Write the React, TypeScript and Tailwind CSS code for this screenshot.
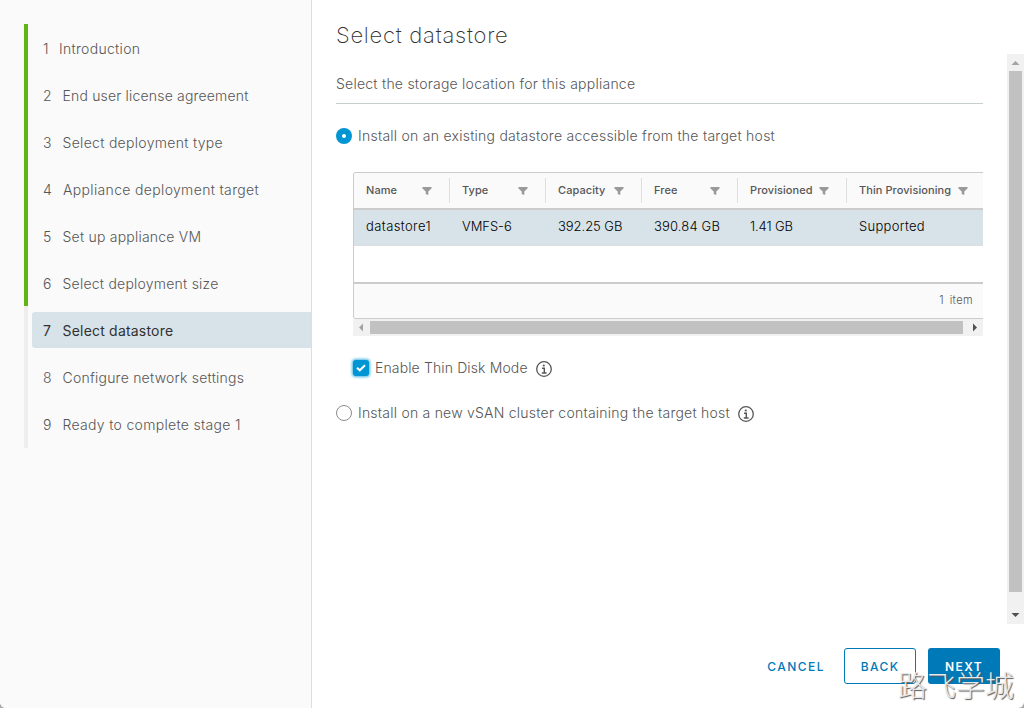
import { clsx } from "clsx";

const steps = [
  { label: "Introduction", text: "ml-[10px] tracking-[0.3px]" },
  { label: "End user license agreement", text: "ml-[11.5px] tracking-[0.18px]" },
  { label: "Select deployment type", text: "ml-[11.5px] tracking-[0.3px]" },
  { label: "Appliance deployment target", text: "ml-[12px] tracking-[0.34px]" },
  { label: "Set up appliance VM", text: "ml-[11.5px] tracking-[0.22px]" },
  { label: "Select deployment size", text: "ml-[11.5px] tracking-[0.23px]" },
  { label: "Select datastore", text: "ml-[11.5px] tracking-[0.2px]" },
  { label: "Configure network settings", text: "ml-[11.5px] tracking-[0.23px]" },
  { label: "Ready to complete stage 1", text: "ml-[11.5px] tracking-[0.31px]" },
];
const current = 6;

const columns = [
  { name: "Name", value: "datastore1", width: "w-24", icon: "mr-[17px]", text: "tracking-[0.4px]" },
  { name: "Type", value: "VMFS-6", width: "w-24", icon: "mr-[17px]", text: "tracking-[-0.05px]" },
  { name: "Capacity", value: "392.25 GB", width: "w-24", icon: "mr-[17px]", text: "tracking-[-0.05px]" },
  { name: "Free", value: "390.84 GB", width: "w-24", icon: "mr-[17px]", text: "tracking-[0.15px]" },
  { name: "Provisioned", value: "1.41 GB", width: "w-[109px]", icon: "mr-[17px]", text: "tracking-[-0.1px]" },
  { name: "Thin Provisioning", value: "Supported", width: "w-[136px]", icon: "mr-[15px]", text: "tracking-[0.3px]" },
];

function FilterIcon() {
  return (
    <svg width="10" height="8" viewBox="0 0 10 8" className="shrink-0 text-[#9a9a9a]">
      <path d="M0.5 0h9v1.6L6.3 4.6V8L3.7 6.9V4.6L0.5 1.6z" fill="currentColor" />
    </svg>
  );
}

function InfoIcon() {
  return (
    <svg width="16" height="16" viewBox="0 0 16 16" className="shrink-0" fill="none" stroke="#565656">
      <circle cx="8" cy="8" r="7.3" strokeWidth="1.3" />
      <circle cx="7.8" cy="4.5" r="1.1" fill="#565656" stroke="none" />
      <path d="M6 7.3h2.3v4.6M5.8 12h4.8" strokeWidth="1.4" />
    </svg>
  );
}

function Arrow({ d, dark }: { d: string; dark?: boolean }) {
  return (
    <svg width="17" height="17" viewBox="0 0 17 17" className="shrink-0">
      <path d={d} fill={dark ? "#505050" : "#a3a3a3"} />
    </svg>
  );
}

function Sidebar() {
  return (
    <nav className="w-[312px] shrink-0 border-r border-[#dedede] bg-[#fafafa] pt-6 pl-6">
      {steps.map((step, i) => (
        <div
          key={step.label}
          className={clsx(
            "flex border-l-4 pt-[6px] pl-1",
            i === steps.length - 1 ? "h-12" : "h-[47px]",
            i < current ? "border-[#60b515]" : "border-[#eeeeee]",
          )}
        >
          <div
            className={clsx(
              "flex h-9 flex-1 items-center rounded-l-[3px] pl-[11px] pt-px text-[14px]",
              i === current ? "bg-[#d8e3e9] text-[#313131]" : "font-light text-[#565656]",
            )}
          >
            <span className={i === 0 ? "w-[6px]" : "w-2"}>{i + 1}</span>
            <span className={clsx("whitespace-nowrap", step.text)}>{step.label}</span>
          </div>
        </div>
      ))}
    </nav>
  );
}

function Grid() {
  return (
    <div className="ml-[17px] w-[630px]">
      <div className="overflow-hidden rounded-l-[3px] border-y border-l border-[#cccccc]">
        <div className="flex h-[37px] border-b-2 border-[#cccccc] bg-[#fafafa]">
          {columns.map((c, i) => (
            <div key={c.name} className={clsx("flex shrink-0 py-[5px]", c.width)}>
              <div
                className={clsx(
                  "flex h-[25px] flex-1 items-center justify-between pl-3",
                  i < columns.length - 1 && "border-r border-[#dedede]",
                )}
              >
                <span className="text-[11px] font-[550] tracking-[0.07px] whitespace-nowrap text-[#565656]">
                  {c.name}
                </span>
                <span className={c.icon}>
                  <FilterIcon />
                </span>
              </div>
            </div>
          ))}
        </div>
        <div className="flex h-9 items-center border-b border-[#dedede] bg-[#d8e3e9] pb-px text-[13px] font-light text-black">
          {columns.map((c) => (
            <div key={c.name} className={clsx("shrink-0 pl-3 whitespace-nowrap", c.width, c.text)}>
              {c.value}
            </div>
          ))}
        </div>
        <div className="h-9 bg-white" />
        <div className="flex h-9 items-center justify-end border-t-2 border-[#cccccc] bg-[#fafafa] pr-[10px] pb-px text-[11px] font-light text-[#565656]">
          <span className="mr-[6px]">1</span>
          <span className="tracking-[0.4px]">item</span>
        </div>
      </div>
      <div className="flex h-[17px] items-center bg-[#f1f1f1]">
        <Arrow d="M10 4.5v8L6 8.5z" />
        <div className="h-[13px] w-[593px] bg-[#c1c1c1]" />
        <Arrow d="M10 4.5v8l4-4z" dark />
      </div>
    </div>
  );
}

export default function App() {
  return (
    <div className="h-[708px] w-[1024px] bg-[#a8a8a8]">
      <div
        className="relative flex h-full overflow-hidden rounded-b-[6px] bg-white text-[#565656]"
        style={{ fontFamily: '"Inter", "Liberation Sans", sans-serif' }}
      >
        <Sidebar />
        <main className="flex flex-1 flex-col">
          <h1 className="h-[54px] pt-[19px] pl-6 text-[22px] leading-8 font-[250] tracking-[0.75px] text-[#313131]">
            Select datastore
          </h1>
          <div className="flex h-[570px]">
            <div className="w-[671px] pl-6 text-[14px] font-light">
              <p className="h-[50px] border-b border-[#c6cfcf] pt-[18px] leading-6 tracking-[0.24px]">
                Select the storage location for this appliance
              </p>
              <div className="mt-5 flex h-6 items-center">
                <span className="flex size-4 items-center justify-center rounded-full bg-[#0095d3]">
                  <span className="size-1 rounded-full bg-white" />
                </span>
                <span className="mb-[2px] ml-[6px] tracking-[0.25px]">
                  Install on an existing datastore accessible from the target host
                </span>
              </div>
              <div className="h-6" />
              <Grid />
              <div className="mt-5 ml-[17px] flex h-6 items-center">
                <span className="flex size-4 items-center justify-center rounded-[3px] bg-[#0095d3] shadow-[0_0_3px_1px_#4ab5e2]">
                  <svg width="10" height="8" viewBox="0 0 10 8" fill="none" stroke="white" strokeWidth="2">
                    <path d="M1 3.7 3.8 6.3 9 1.2" />
                  </svg>
                </span>
                <span className="mb-[2px] ml-[6px] w-[153px] tracking-[0.13px] whitespace-nowrap">
                  Enable Thin Disk Mode
                </span>
                <span className="mt-[2px] ml-2">
                  <InfoIcon />
                </span>
              </div>
              <div className="mt-[21px] flex h-6 items-center">
                <span className="size-4 rounded-full border border-[#8c8c8c]" />
                <span className="mb-[2px] ml-[6px] w-[372px] tracking-[0.23px] whitespace-nowrap">
                  Install on a new vSAN cluster containing the target host
                </span>
                <span className="mt-[2px] ml-2">
                  <InfoIcon />
                </span>
              </div>
            </div>
            <div className="ml-6 flex w-[17px] flex-col items-center bg-[#f1f1f1]">
              <Arrow d="M4.5 11h8l-4-4z" />
              <div className="mb-auto h-[521px] w-[13px] bg-[#c1c1c1]" />
              <Arrow d="M4.5 6h8l-4 4z" dark />
            </div>
          </div>
          <div className="mt-6 flex items-center justify-end pr-6 text-[12px] font-medium tracking-[1.4px]">
            <button className="mr-[19px] h-9 pt-px tracking-[1.45px] text-[#0079b8]">CANCEL</button>
            <button className="mr-3 h-9 w-[72px] rounded-[3px] border border-[#0079b8] pt-px text-[#0079b8]">
              BACK
            </button>
            <button className="h-9 w-[72px] rounded-[3px] bg-[#0079b8] pt-px font-semibold text-white">NEXT</button>
          </div>
        </main>
        <div className="absolute top-[664px] left-[898px] font-['Noto_Sans_CJK_SC'] text-[29px] leading-10 font-light whitespace-nowrap text-[#e8e8e8] [text-shadow:1px_1px_1px_#555]">
          路飞学城
        </div>
      </div>
    </div>
  );
}
